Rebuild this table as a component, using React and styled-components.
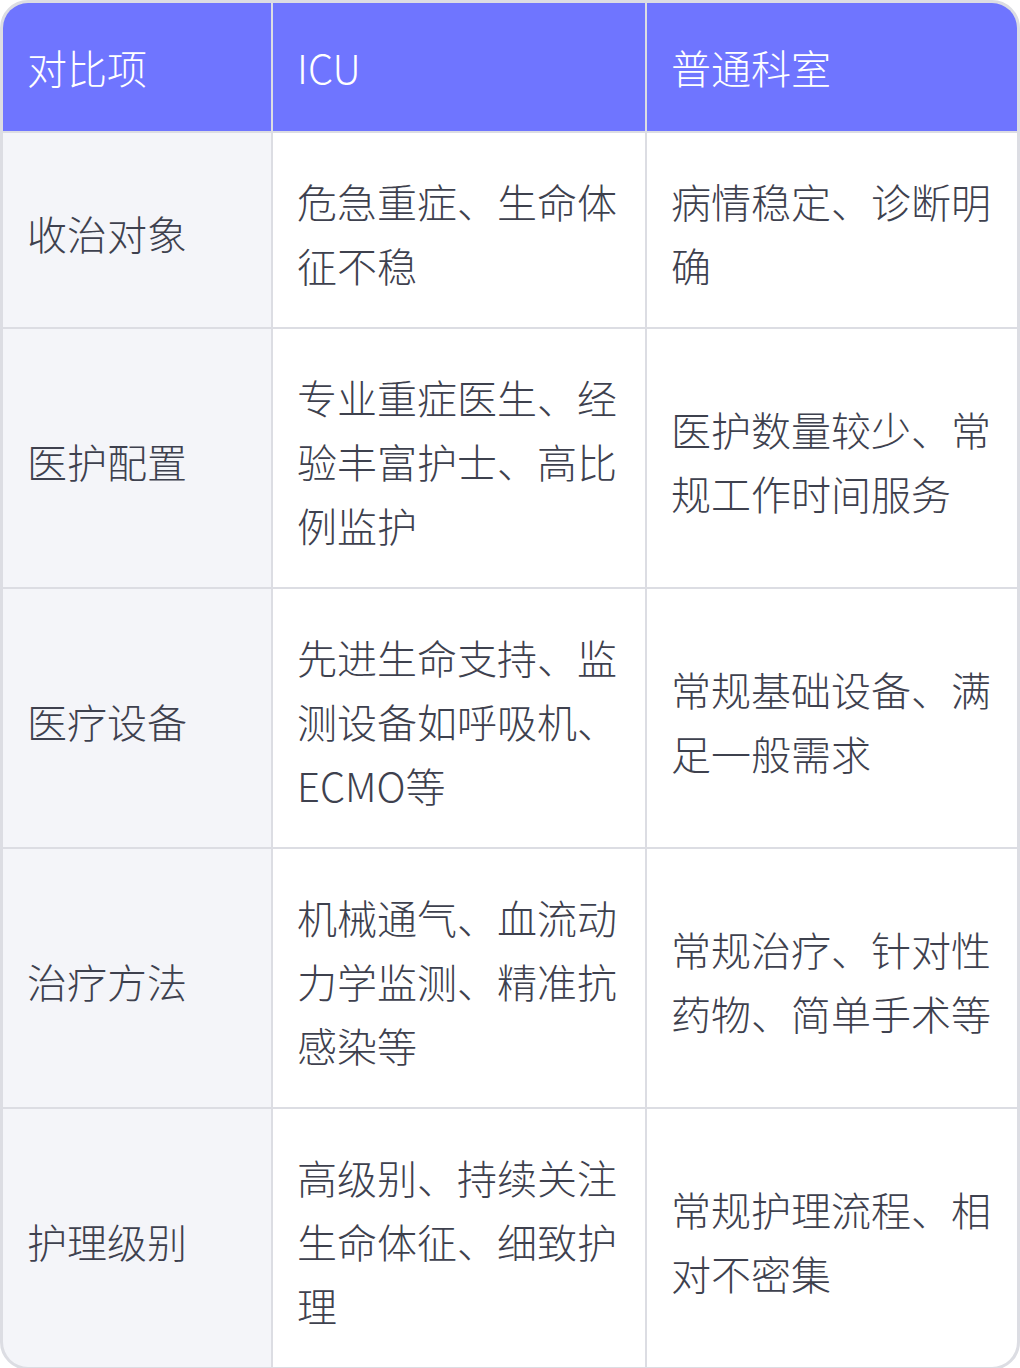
import React from "react";
import styled, { createGlobalStyle } from "styled-components";

const Global = createGlobalStyle`
  html, body { margin: 0; padding: 0; background: #ffffff; }
  body { font-family: "Noto Sans CJK SC", "Noto Sans", sans-serif; }
`;

const Card = styled.div`
  width: 1020px;
  box-sizing: border-box;
  border: 3px solid #dcdde3;
  border-radius: 28px;
  overflow: hidden;
  background: #dcdde3;
  display: grid;
  grid-template-columns: 268px 372px 370px;
  gap: 2px;
`;

const HeadCell = styled.div`
  background: #6f75ff;
  color: #ffffff;
  font-size: 40px;
  line-height: 64px;
  font-weight: 300;
  padding: 32px 24px;
  display: flex;
  align-items: center;
`;

const Cell = styled.div`
  background: ${(p) => (p.$label ? "#f4f5f9" : "#ffffff")};
  color: #3e414e;
  font-size: 40px;
  line-height: 64px;
  font-weight: 300;
  padding: 36px 24px 30px;
  display: flex;
  align-items: center;
  word-break: break-all;
`;

const headers = ["对比项", "ICU", "普通科室"];

const rows = [
  ["收治对象", "危急重症、生命体征不稳", "病情稳定、诊断明确"],
  ["医护配置", "专业重症医生、经验丰富护士、高比例监护", "医护数量较少、常规工作时间服务"],
  ["医疗设备", "先进生命支持、监测设备如呼吸机、ECMO等", "常规基础设备、满足一般需求"],
  ["治疗方法", "机械通气、血流动力学监测、精准抗感染等", "常规治疗、针对性药物、简单手术等"],
  ["护理级别", "高级别、持续关注生命体征、细致护理", "常规护理流程、相对不密集"],
];

export default function App() {
  return (
    <>
      <Global />
      <Card>
        {headers.map((h) => (
          <HeadCell key={h}>{h}</HeadCell>
        ))}
        {rows.map((r) =>
          r.map((c, i) => (
            <Cell key={r[0] + i} $label={i === 0}>
              {c}
            </Cell>
          ))
        )}
      </Card>
    </>
  );
}
